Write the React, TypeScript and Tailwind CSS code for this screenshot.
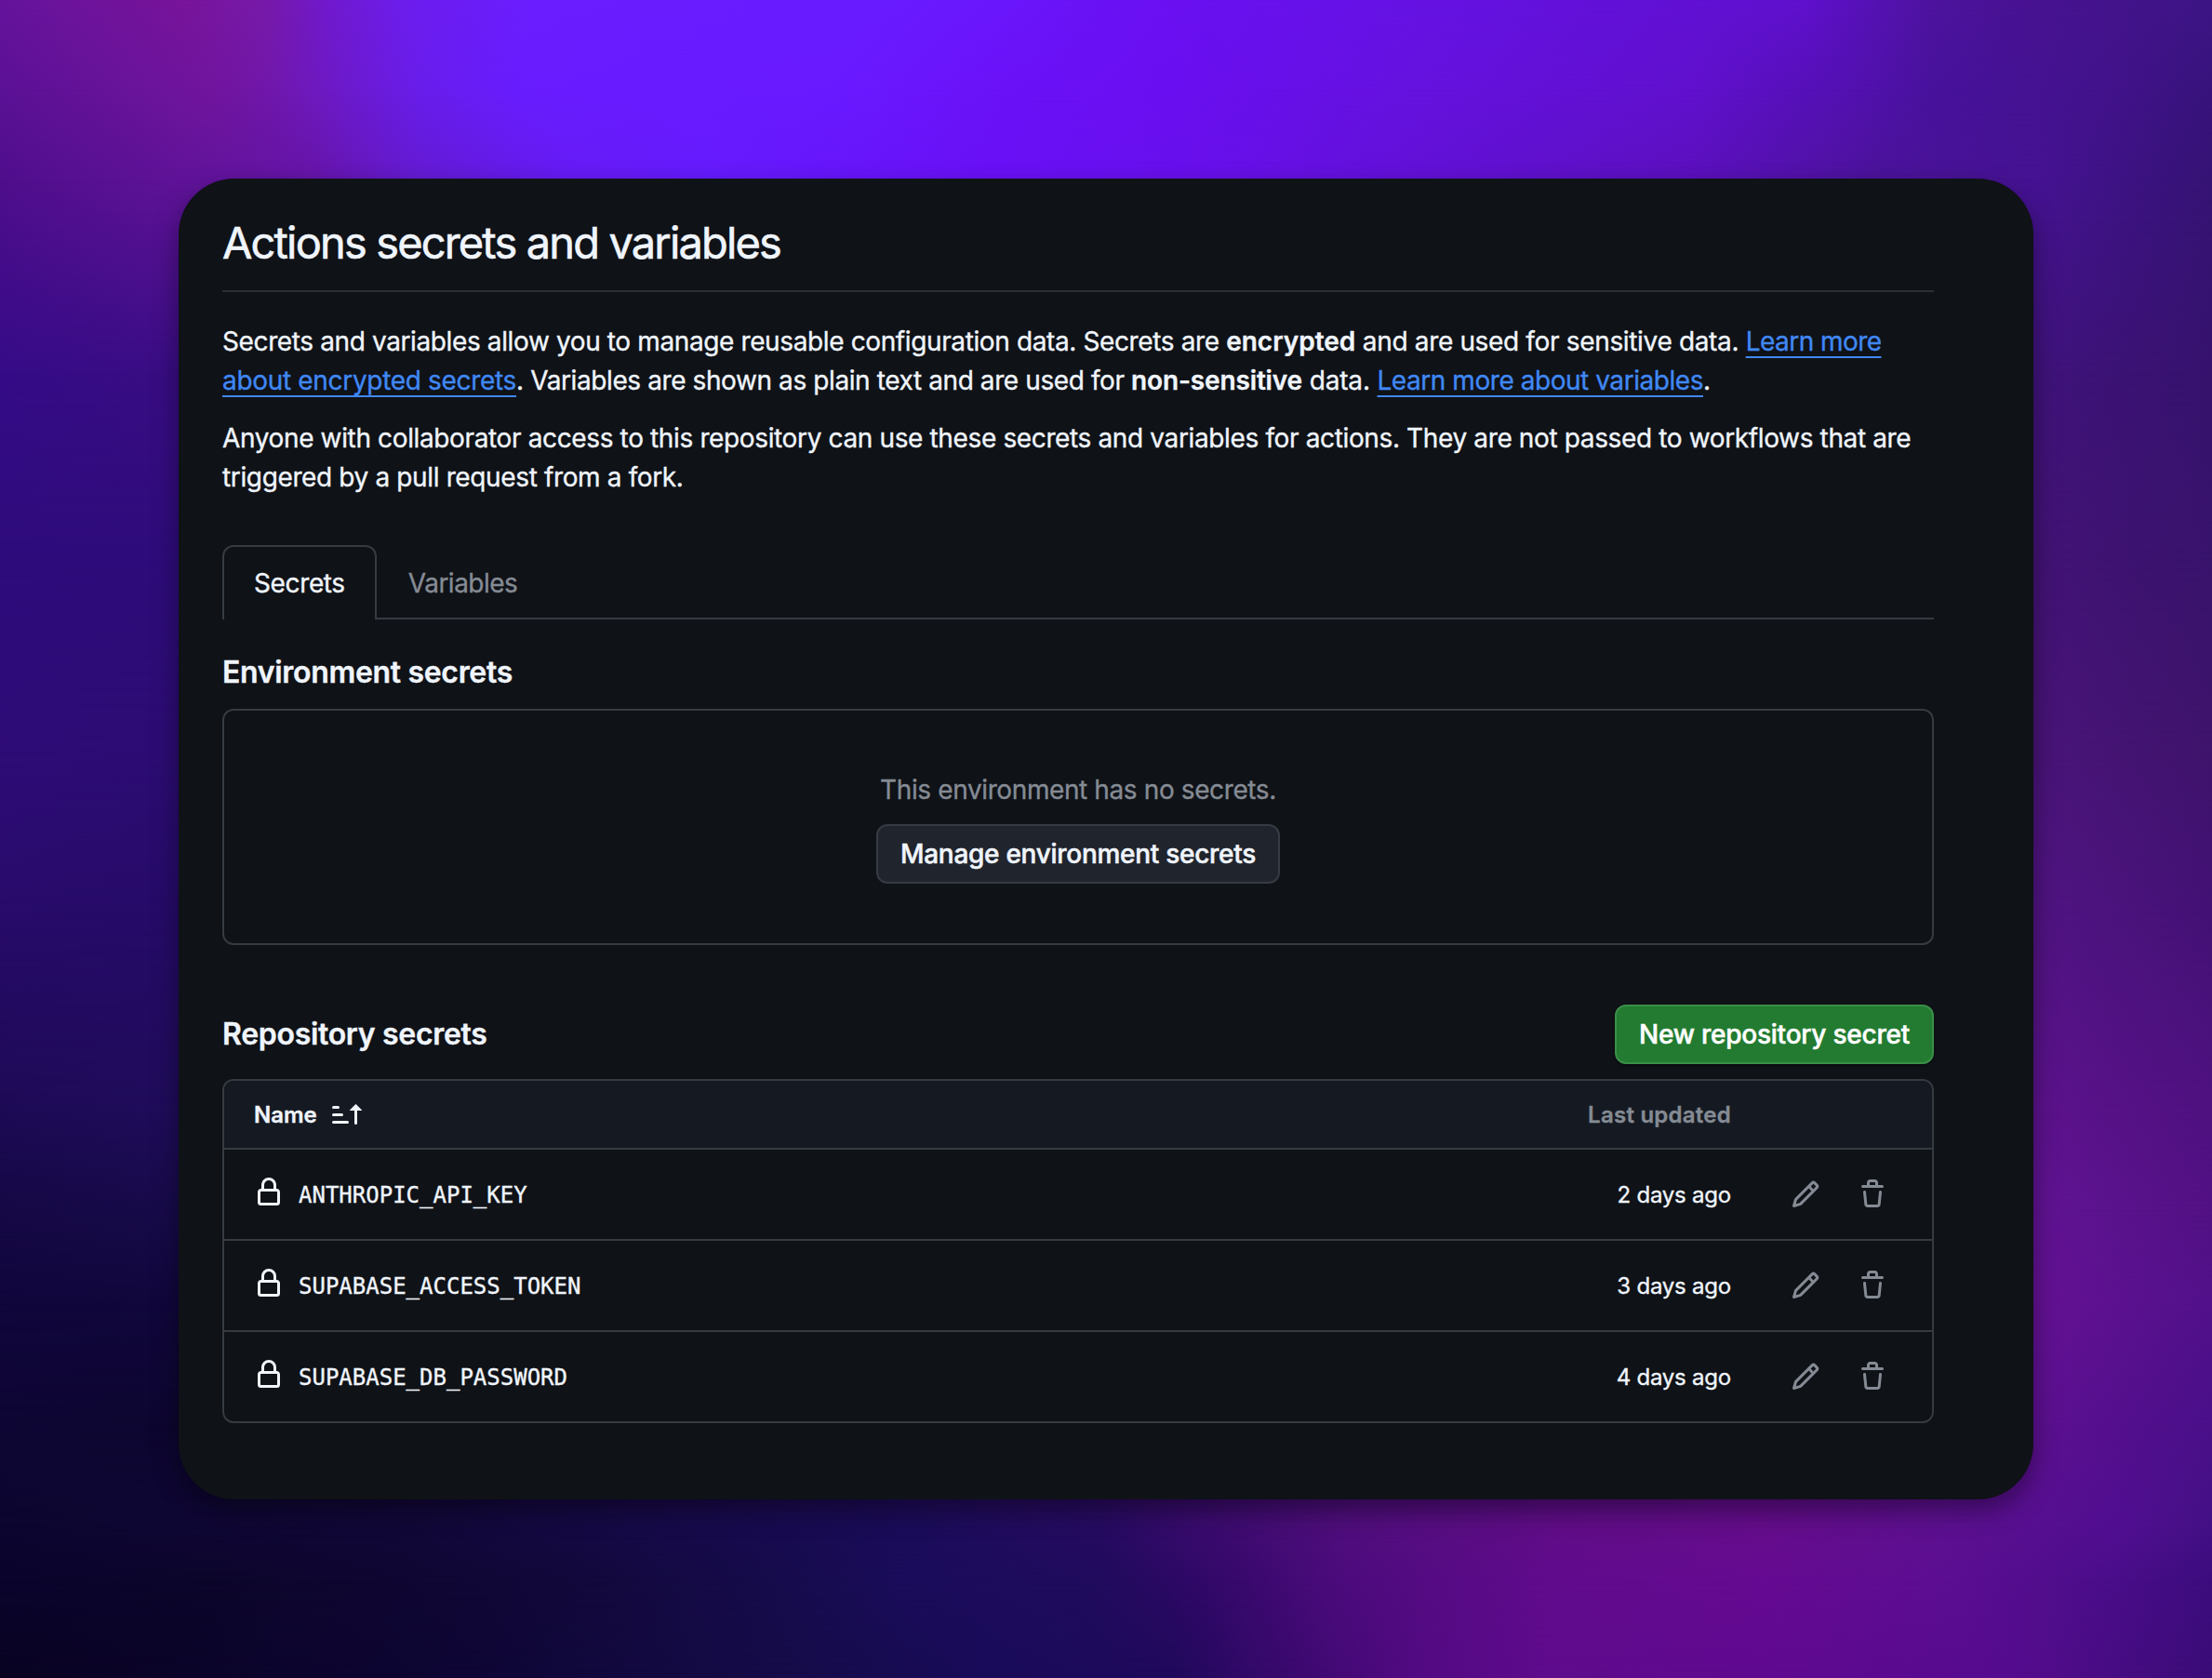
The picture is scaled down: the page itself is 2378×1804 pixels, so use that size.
import type { ReactNode } from "react";

type Stop = [number, string];

// Colour samples of the wallpaper: each band blends into the next one.
const BANDS: { y: number; stops: Stop[] }[] = [
  { y: 0, stops: [[0, "#65139c"], [197, "#78149b"], [288, "#771aaa"], [349, "#7119cc"], [440, "#6c1dee"], [576, "#6b1eff"], [910, "#681cff"], [1062, "#6a17fd"], [1244, "#6a10f2"], [1517, "#6512e4"], [1941, "#5f10cd"], [2078, "#4d139e"], [2199, "#471290"], [2378, "#3d1585"]] },
  { y: 96, stops: [[0, "#5b1195"], [228, "#71159e"], [288, "#7017aa"], [380, "#6c1bd0"], [455, "#681deb"], [561, "#681dff"], [910, "#6919ff"], [1092, "#6b11f7"], [1259, "#690ef0"], [1517, "#6512df"], [1820, "#6010cd"], [1987, "#5310b1"], [2078, "#48129c"], [2275, "#41128a"], [2378, "#38137c"]] },
  { y: 192, stops: [[0, "#4f0e8c"], [197, "#601398"], [334, "#6614a8"], [440, "#641bd0"], [607, "#651bf4"], [758, "#651bfd"], [1062, "#6910f6"], [1289, "#6810eb"], [1517, "#6211d7"], [1820, "#5b10bd"], [2017, "#4b139a"], [2186, "#451293"], [2378, "#351374"]] },
  { y: 400, stops: [[0, "#350b87"], [192, "#390d83"], [2186, "#40137c"], [2378, "#36126d"]] },
  { y: 600, stops: [[0, "#2e0c7c"], [192, "#2e0c7a"], [2186, "#431376"], [2378, "#38136c"]] },
  { y: 805, stops: [[0, "#2e0c77"], [192, "#2c0c73"], [2186, "#491479"], [2378, "#3f146c"]] },
  { y: 980, stops: [[0, "#280b6a"], [192, "#260b68"], [2186, "#511483"], [2378, "#431175"]] },
  { y: 1196, stops: [[0, "#1d0a55"], [192, "#1f0c5a"], [2186, "#5d128d"], [2378, "#4f1180"]] },
  { y: 1300, stops: [[0, "#150845"], [192, "#180b4a"], [2186, "#611393"], [2378, "#521184"]] },
  { y: 1400, stops: [[0, "#11063c"], [192, "#11073c"], [2186, "#641194"], [2378, "#52118a"]] },
  { y: 1530, stops: [[0, "#0e0634"], [192, "#0d0630"], [2186, "#5d1091"], [2378, "#4a0f8a"]] },
  { y: 1640, stops: [[0, "#0c052f"], [455, "#120839"], [971, "#1a0c59"], [1183, "#260b61"], [1289, "#390b6d"], [1441, "#4f0e7c"], [1668, "#600d87"], [1896, "#650d8b"], [2093, "#5c1090"], [2275, "#510e91"], [2378, "#431085"]] },
  { y: 1700, stops: [[0, "#0a042c"], [228, "#0c052a"], [607, "#12083a"], [849, "#170c4d"], [971, "#1a0c5a"], [1183, "#200b5d"], [1289, "#300867"], [1441, "#4c0b7c"], [1668, "#610b8d"], [1896, "#650a92"], [2093, "#5c0e92"], [2275, "#490d89"], [2378, "#3c0c7d"]] },
  { y: 1804, stops: [[0, "#090322"], [455, "#0d0532"], [849, "#160c49"], [1062, "#190b59"], [1259, "#1f095b"], [1365, "#36096b"], [1517, "#510a81"], [1668, "#5f0b8d"], [1896, "#5f0990"], [2154, "#560c8f"], [2378, "#3a0c77"]] },
];

function Wallpaper() {
  return (
    <div className="absolute inset-0">
      {BANDS.map((band, i) => {
        const from = i === 0 ? -1 : BANDS[i - 1].y;
        return (
          <div
            key={band.y}
            className="absolute inset-0"
            style={{
              backgroundImage: `linear-gradient(90deg, ${band.stops.map(([x, c]) => `${c} ${x}px`).join(", ")})`,
              maskImage: `linear-gradient(180deg, transparent ${from}px, black ${band.y}px)`,
            }}
          />
        );
      })}
    </div>
  );
}

function Octicon({ d, className }: { d: string; className?: string }) {
  return (
    <svg viewBox="0 0 16 16" className={`size-8 shrink-0 fill-current ${className ?? ""}`} aria-hidden="true">
      <path d={d} />
    </svg>
  );
}

const SORT_ASC =
  "m12.927 2.573 3 3A.25.25 0 0 1 15.75 6H13.5v6.75a.75.75 0 0 1-1.5 0V6H9.75a.25.25 0 0 1-.177-.427l3-3a.25.25 0 0 1 .354 0ZM0 12.25a.75.75 0 0 1 .75-.75h7.5a.75.75 0 0 1 0 1.5H.75a.75.75 0 0 1-.75-.75Zm0-4a.75.75 0 0 1 .75-.75h4.5a.75.75 0 0 1 0 1.5H.75a.75.75 0 0 1-.75-.75Zm0-4a.75.75 0 0 1 .75-.75h2.5a.75.75 0 0 1 0 1.5H.75a.75.75 0 0 1-.75-.75Z";
const LOCK =
  "M4 4a4 4 0 0 1 8 0v2h.25c.966 0 1.75.784 1.75 1.75v5.5A1.75 1.75 0 0 1 12.25 15h-8.5A1.75 1.75 0 0 1 2 13.25v-5.5C2 6.784 2.784 6 3.75 6H4Zm8.25 3.5h-8.5a.25.25 0 0 0-.25.25v5.5c0 .138.112.25.25.25h8.5a.25.25 0 0 0 .25-.25v-5.5a.25.25 0 0 0-.25-.25ZM10.5 6V4a2.5 2.5 0 1 0-5 0v2Z";
const PENCIL =
  "M11.013 1.427a1.75 1.75 0 0 1 2.474 0l1.086 1.086a1.75 1.75 0 0 1 0 2.474l-8.61 8.61c-.21.21-.47.364-.756.445l-3.251.93a.75.75 0 0 1-.927-.928l.929-3.25c.081-.286.235-.547.445-.758l8.61-8.61Zm.176 4.823L9.75 4.81l-6.286 6.287a.253.253 0 0 0-.064.108l-.558 1.953 1.953-.558a.253.253 0 0 0 .108-.064Zm1.238-3.763a.25.25 0 0 0-.354 0L10.811 3.75l1.439 1.44 1.263-1.263a.25.25 0 0 0 0-.354Z";
const TRASH =
  "M11 1.75V3h2.25a.75.75 0 0 1 0 1.5H2.75a.75.75 0 0 1 0-1.5H5V1.75C5 .784 5.784 0 6.75 0h2.5C10.216 0 11 .784 11 1.75ZM4.496 6.675l.66 6.6a.25.25 0 0 0 .249.225h5.19a.25.25 0 0 0 .249-.225l.66-6.6a.75.75 0 0 1 1.492.149l-.66 6.6A1.748 1.748 0 0 1 10.595 15h-5.19a1.75 1.75 0 0 1-1.741-1.575l-.66-6.6a.75.75 0 1 1 1.492-.15ZM6.5 1.75V3h3V1.75a.25.25 0 0 0-.25-.25h-2.5a.25.25 0 0 0-.25.25Z";

function Link({ children, className }: { children: ReactNode; className: string }) {
  return (
    <a className={`text-[#4088f5] underline decoration-2 underline-offset-[6px] [text-decoration-skip-ink:none] ${className}`}>
      {children}
    </a>
  );
}

const SECRETS = [
  { name: "ANTHROPIC_API_KEY", updated: "2 days ago" },
  { name: "SUPABASE_ACCESS_TOKEN", updated: "3 days ago" },
  { name: "SUPABASE_DB_PASSWORD", updated: "4 days ago" },
];

export default function App() {
  return (
    <div className="relative h-[1804px] w-[2378px] overflow-hidden p-48 font-['Inter',sans-serif] text-[#f0f5fc] [-webkit-text-stroke-width:0.35px]">
      <Wallpaper />
      <main className="relative h-[1420px] rounded-[60px] bg-[#0f1217] pt-8 pr-[107px] pl-[47px] shadow-[0_12px_28px_rgba(0,0,0,0.4)]">
        <h1 className="border-b-2 border-[#2b2e33] pt-px pb-[15px] text-[47px] leading-[72px] font-normal tracking-[-1.85px] [-webkit-text-stroke-width:0.6px]">
          Actions secrets and variables
        </h1>

        <div className="mt-8 space-y-5 text-[28px] leading-[42px] whitespace-nowrap">
          <p className="tracking-[-0.38px]">
            Secrets and variables allow you to manage reusable configuration data. Secrets are{" "}
            <strong className="font-semibold tracking-normal">encrypted</strong>
            <span className="tracking-[-0.34px]"> and are used for sensitive data. </span>
            <Link className="tracking-[-0.55px]">Learn more</Link>
            <br />
            <Link className="tracking-[-0.32px]">about encrypted secrets</Link>
            <span className="tracking-[-0.4px]">. Variables are shown as plain text and are used for </span>
            <strong className="font-semibold tracking-[-0.15px]">non-sensitive</strong>
            <span className="tracking-[-0.17px]"> data. </span>
            <Link className="tracking-[-0.45px]">Learn more about variables</Link>.
          </p>
          <p className="tracking-[-0.365px]">
            Anyone with collaborator access to this repository can use these secrets and variables for actions. They are not passed to workflows that are
            <br />
            triggered by a pull request from a fork.
          </p>
        </div>

        <div className="mt-[52px] flex h-20 text-[28px] leading-[42px]">
          <div className="rounded-t-xl border-2 border-b-0 border-[#363b42] px-8 pt-[18px] tracking-[-0.37px]">Secrets</div>
          <div className="flex-1 border-b-2 border-[#363b42] pt-5 pl-[34px] tracking-[-0.5px] text-[#858b94]">Variables</div>
        </div>

        <h2 className="mt-[33px] text-[32px] leading-[48px] font-semibold tracking-[-0.32px]">Environment secrets</h2>
        <div className="mt-[15px] flex h-[254px] flex-col items-center gap-4 rounded-xl border-2 border-[#363b42] pt-16 text-[28px]">
          <p className="leading-[42px] tracking-[-0.39px] text-[#858b94]">This environment has no secrets.</p>
          <button className="h-16 rounded-xl border-2 border-[#363b42] bg-[#20242c] px-6 font-medium tracking-[-0.285px] [-webkit-text-stroke-width:0.5px]">
            Manage environment secrets
          </button>
        </div>

        <div className="mt-16 flex h-16 items-center justify-between">
          <h2 className="text-[32px] leading-[48px] font-semibold tracking-[-0.3px]">Repository secrets</h2>
          <button className="h-16 rounded-xl border-2 border-[#3b8e49] bg-[#227b30] px-6 text-[28px] font-medium tracking-[-0.235px] text-white shadow-[0_2px_3px_rgba(0,0,0,0.4)] [-webkit-text-stroke-width:0.5px]">
            New repository secret
          </button>
        </div>

        <div className="mt-4 overflow-hidden rounded-xl border-2 border-[#363b42] text-[24px]">
          <div className="flex h-[72px] items-center justify-between bg-[#151a22] pr-[216px] pl-8 font-semibold">
            <div className="flex items-center gap-4">
              <span className="pt-0.5">Name</span>
              <Octicon d={SORT_ASC} />
            </div>
            <span className="pt-0.5 tracking-[0.25px] text-[#858b94]">Last updated</span>
          </div>
          {SECRETS.map((secret) => (
            <div key={secret.name} className="flex h-[98px] items-center border-t-2 border-[#363b42] pr-12 pl-8">
              <Octicon d={LOCK} className="-mt-1" />
              <span className="ml-4 pt-0.5 font-['DejaVu_Sans_Mono',monospace]">{secret.name}</span>
              <span className="mr-16 ml-auto pt-0.5 tracking-[-0.22px]">{secret.updated}</span>
              <div className="flex gap-10 text-[#858b94]">
                <Octicon d={PENCIL} />
                <Octicon d={TRASH} />
              </div>
            </div>
          ))}
        </div>
      </main>
    </div>
  );
}
